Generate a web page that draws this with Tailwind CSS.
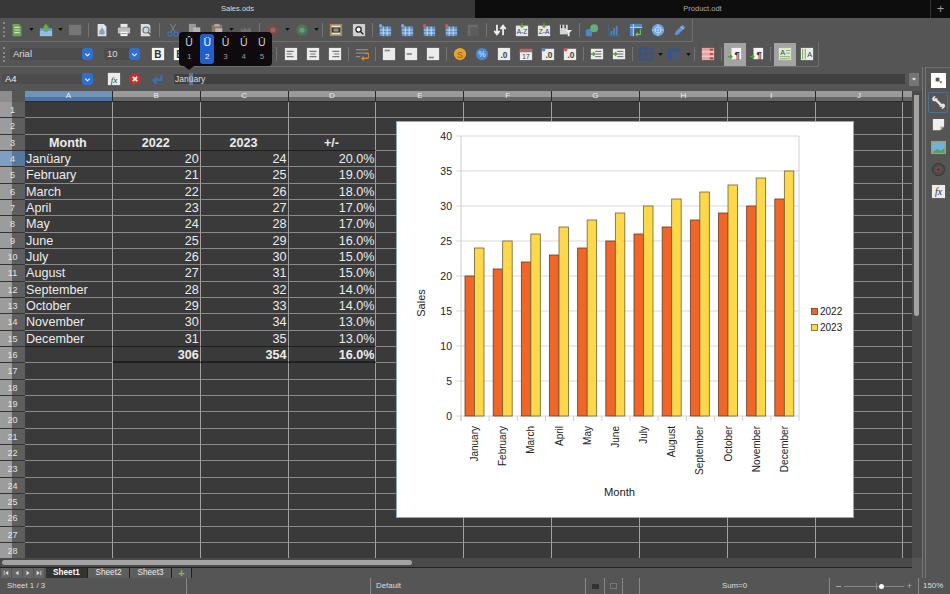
<!DOCTYPE html>
<html lang="en">
<head>
  <meta charset="UTF-8" />
  <title>Sales.ods</title>
  <script src="https://cdn.jsdelivr.net/npm/@tailwindcss/browser@4"></script>
</head>
<body class="w-[950px] h-[594px] overflow-hidden bg-[#555555] font-['Liberation_Sans',Arial,sans-serif] text-[#ececec] flex flex-col relative">

  <!-- icon set -->
  <svg class="hidden">
    <symbol id="i-new" viewBox="0 0 16 16"><path d="M3 1h7l3 3v11H3z" fill="#6fa558"/><path d="M5 5h6M5 8h6M5 11h6" stroke="#cfe3c3" stroke-width="1.200"/></symbol>
    <symbol id="i-open" viewBox="0 0 16 16"><path d="M1 6h14v9H1z" fill="#6f9fd0"/><path d="M1 9h14v6H1z" fill="#93bde6"/><path d="M8 1l4 4H10v5H6V5H4z" fill="#62b33d"/></symbol>
    <symbol id="i-save" viewBox="0 0 16 16"><rect x="1" y="2" width="14" height="12" fill="#767676"/></symbol>
    <symbol id="i-pdf" viewBox="0 0 16 16"><path d="M3 1h7l3 3v11H3z" fill="#dfe3e8"/><path d="M5 9l3-4 3 4v4H5z" fill="#8ea0b5"/></symbol>
    <symbol id="i-print" viewBox="0 0 16 16"><rect x="4" y="1" width="8" height="4" fill="#e6e6e6"/><rect x="1" y="5" width="14" height="7" rx="1" fill="#bdbdbd"/><rect x="4" y="10" width="8" height="5" fill="#f5f5f5"/><path d="M5 12h6" stroke="#888"/></symbol>
    <symbol id="i-preview" viewBox="0 0 16 16"><path d="M2 1h9l2 2v12H2z" fill="#dcdcdc"/><circle cx="8" cy="8" r="3.500" fill="#c8d6e4" stroke="#666" stroke-width="1.200"/><path d="M10.500 10.500l3.500 3.500" stroke="#555" stroke-width="1.600"/></symbol>
    <symbol id="i-cut" viewBox="0 0 16 16"><path d="M5 1l5 9M11 1L6 10" stroke="#7a7a7a" stroke-width="1.300"/><circle cx="4.500" cy="12.500" r="2.300" fill="none" stroke="#3f70ad" stroke-width="1.600"/><circle cx="11.500" cy="12.500" r="2.300" fill="none" stroke="#3f70ad" stroke-width="1.600"/></symbol>
    <symbol id="i-copy" viewBox="0 0 16 16"><path d="M1 1h8v11H1z" fill="#9a9a9a"/><path d="M6 5h8v10H6z" fill="#b5b5b5"/></symbol>
    <symbol id="i-paste" viewBox="0 0 16 16"><rect x="2" y="2" width="12" height="13" fill="#8d7a55"/><rect x="5" y="1" width="6" height="3" fill="#aaa"/><rect x="6" y="6" width="8" height="9" fill="#b5b5b5"/></symbol>
    <symbol id="i-clone" viewBox="0 0 16 16"><path d="M2 5l2 3 3-3 2 3 3-3 2 3v4H2z" fill="#6f6f6f"/></symbol>
    <symbol id="i-undo" viewBox="0 0 16 16"><circle cx="8" cy="8" r="6.500" fill="#7a4a4a"/><circle cx="8" cy="8" r="3" fill="#a06060"/></symbol>
    <symbol id="i-redo" viewBox="0 0 16 16"><circle cx="8" cy="8" r="6.500" fill="#4e7558"/><circle cx="8" cy="8" r="3" fill="#6a9a76"/></symbol>
    <symbol id="i-ab" viewBox="0 0 16 16"><rect x="1" y="1" width="14" height="14" fill="#a9894e"/><rect x="3" y="3" width="10" height="10" fill="#e7e7e7"/><rect x="3" y="5" width="10" height="6" fill="#333"/><path d="M5 7h6M5 9h6" stroke="#ddd"/></symbol>
    <symbol id="i-find" viewBox="0 0 16 16"><rect x="1" y="1" width="14" height="14" rx="1" fill="#cfcfcf"/><circle cx="7.500" cy="7.500" r="3" fill="#fff" stroke="#222" stroke-width="1.500"/><path d="M10 10l3 3" stroke="#222" stroke-width="1.600"/></symbol>
    <symbol id="i-rows" viewBox="0 0 16 16"><rect x="2" y="4" width="13" height="11" fill="#5b8ec8"/><path d="M2 8h13M2 11.500h13M6 4v11M10.500 4v11" stroke="#dbe7f4" stroke-width=".9"/><circle cx="3" cy="3" r="2" fill="#7aa6dc"/></symbol>
    <symbol id="i-rowsdel" viewBox="0 0 16 16"><rect x="2" y="4" width="13" height="11" fill="#5b8ec8"/><path d="M2 8h13M2 11.500h13M6 4v11M10.500 4v11" stroke="#dbe7f4" stroke-width=".9"/><circle cx="3" cy="3" r="2" fill="#d9534f"/></symbol>
    <symbol id="i-freeze" viewBox="0 0 16 16"><rect x="2" y="2" width="12" height="13" fill="#6b6b6b"/><rect x="5" y="5" width="9" height="10" fill="#5c5c5c"/></symbol>
    <symbol id="i-sort" viewBox="0 0 16 16"><path d="M4.500 2v10M1.500 9l3 4 3-4M11.500 14V4M8.500 7l3-4 3 4" fill="none" stroke="#f1f1f1" stroke-width="2"/></symbol>
    <symbol id="i-az" viewBox="0 0 16 16"><rect x="1" y="3" width="14" height="12" fill="#e6e6e6"/><path d="M8 0v4M6 3l2 2 2-2" stroke="#5ea63c" stroke-width="1.400" fill="none"/><text x="8" y="13" text-anchor="middle" font-size="7.500" font-family="Liberation Sans" fill="#444">A-Z</text></symbol>
    <symbol id="i-za" viewBox="0 0 16 16"><rect x="1" y="3" width="14" height="12" fill="#e6e6e6"/><path d="M8 0v4M6 3l2 2 2-2" stroke="#5ea63c" stroke-width="1.400" fill="none"/><text x="8" y="13" text-anchor="middle" font-size="7.500" font-family="Liberation Sans" fill="#444">Z-A</text></symbol>
    <symbol id="i-filter" viewBox="0 0 16 16"><rect x="1" y="2" width="9" height="11" fill="#d5d5d5"/><path d="M3 2v4M7 2v4" stroke="#333" stroke-width="1.500"/><path d="M7 8h8l-3 3v4h-2v-4z" fill="#ededed"/></symbol>
    <symbol id="i-shapes" viewBox="0 0 16 16"><path d="M1 8l7-2v9H1z" fill="#4f86c6"/><circle cx="10.500" cy="6" r="4.500" fill="#5fb07a"/></symbol>
    <symbol id="i-chart" viewBox="0 0 16 16"><path d="M2 2v13h12" fill="none" stroke="#3c6ca6" stroke-width="1"/><path d="M5 14V9M8 14V6M11 14V3" stroke="#4f86c6" stroke-width="2"/></symbol>
    <symbol id="i-pivot" viewBox="0 0 16 16"><rect x="1" y="1" width="14" height="14" fill="#4f86c6"/><path d="M1 5h14M5 1v14" stroke="#d5e4f3"/><rect x="6" y="6" width="9" height="9" fill="#555"/><path d="M13 7v6H8M10 11l-2 2 2 2" fill="none" stroke="#79c257" stroke-width="1.200"/></symbol>
    <symbol id="i-globe" viewBox="0 0 16 16"><circle cx="8" cy="8" r="7" fill="#6da4e3"/><circle cx="8" cy="8" r="3.500" fill="none" stroke="#c9def6"/><path d="M1 8h14M8 1v14" stroke="#c9def6" stroke-width=".7"/></symbol>
    <symbol id="i-pen" viewBox="0 0 16 16"><path d="M2 14l1-4 8-8 3 3-8 8z" fill="#5d95d9"/><path d="M9 4l3 3" stroke="#cfe2f7"/></symbol>
    <symbol id="i-bold" viewBox="0 0 16 16"><rect x="1" y="1" width="14" height="14" fill="#f4f4f4"/><text x="8" y="12.500" text-anchor="middle" font-size="11.500" font-weight="700" font-family="Liberation Sans" fill="#333">B</text></symbol>
    <symbol id="i-left" viewBox="0 0 16 16"><rect x="1" y="1" width="14" height="14" fill="#ececec"/><path d="M3 5h8M3 8h6M3 11h8" stroke="#777" stroke-width="1.200"/></symbol>
    <symbol id="i-center" viewBox="0 0 16 16"><rect x="1" y="1" width="14" height="14" fill="#ececec"/><path d="M4 5h8M5 8h6M4 11h8" stroke="#777" stroke-width="1.200"/></symbol>
    <symbol id="i-right" viewBox="0 0 16 16"><rect x="1" y="1" width="14" height="14" fill="#ececec"/><path d="M5 5h8M7 8h6M5 11h8" stroke="#777" stroke-width="1.200"/></symbol>
    <symbol id="i-wrap" viewBox="0 0 16 16"><path d="M1 3h14M1 7h10M1 11h5" stroke="#8a8a8a" stroke-width="1.300"/><path d="M11 7h2a2 2 0 0 1 0 6H8M10 11l-2 2 2 2" fill="none" stroke="#e58a2e" stroke-width="1.500"/></symbol>
    <symbol id="i-vtop" viewBox="0 0 16 16"><rect x="1" y="1" width="14" height="14" fill="#ececec"/><path d="M3 4h6" stroke="#888" stroke-width="2"/></symbol>
    <symbol id="i-vmid" viewBox="0 0 16 16"><rect x="1" y="1" width="14" height="14" fill="#ececec"/><path d="M3 8h6" stroke="#888" stroke-width="2"/></symbol>
    <symbol id="i-vbot" viewBox="0 0 16 16"><rect x="1" y="1" width="14" height="14" fill="#ececec"/><path d="M3 12h6" stroke="#888" stroke-width="2"/></symbol>
    <symbol id="i-cur" viewBox="0 0 16 16"><circle cx="8" cy="8" r="7" fill="#e5a52b"/><text x="8" y="12" text-anchor="middle" font-size="10.500" font-family="Liberation Sans" fill="#9a5a10">S</text></symbol>
    <symbol id="i-pct" viewBox="0 0 16 16"><circle cx="8" cy="8" r="7" fill="#4f86d0"/><text x="8" y="11.500" text-anchor="middle" font-size="9.500" font-family="Liberation Sans" fill="#dfeafa">%</text></symbol>
    <symbol id="i-num" viewBox="0 0 16 16"><rect x="1" y="1" width="14" height="14" fill="#ececec"/><text x="8" y="12" text-anchor="middle" font-size="9.500" font-weight="700" font-family="Liberation Sans" fill="#444">.0</text></symbol>
    <symbol id="i-date" viewBox="0 0 16 16"><rect x="1" y="3" width="14" height="12" fill="#ececec"/><rect x="1" y="2" width="14" height="4" fill="#b5696b"/><text x="8" y="14" text-anchor="middle" font-size="7.500" font-family="Liberation Sans" fill="#444">17</text></symbol>
    <symbol id="i-numadd" viewBox="0 0 16 16"><rect x="1" y="2" width="14" height="13" fill="#ececec"/><text x="9" y="13" text-anchor="middle" font-size="9.500" font-weight="700" font-family="Liberation Sans" fill="#444">.0</text><circle cx="3" cy="3" r="2" fill="#4f86c6"/></symbol>
    <symbol id="i-numdel" viewBox="0 0 16 16"><rect x="1" y="2" width="14" height="13" fill="#ececec"/><text x="9" y="13" text-anchor="middle" font-size="9.500" font-weight="700" font-family="Liberation Sans" fill="#444">.0</text><circle cx="3" cy="3" r="2" fill="#d9534f"/></symbol>
    <symbol id="i-indent" viewBox="0 0 16 16"><rect x="1" y="2" width="14" height="12" fill="#ececec"/><path d="M6 5h7M6 8h7M6 11h7" stroke="#666" stroke-width="1.100"/><path d="M1 8h4M3.500 6l2 2-2 2" fill="none" stroke="#4ea32f" stroke-width="1.500"/></symbol>
    <symbol id="i-border" viewBox="0 0 16 16"><rect x="1.500" y="1.500" width="13" height="13" fill="none" stroke="#31558c" stroke-width="2"/><path d="M8 1v14M1 8h14" stroke="#31558c" stroke-width="1.500"/></symbol>
    <symbol id="i-bstyle" viewBox="0 0 16 16"><path d="M1 2h14v3H5v10H1z" fill="#31558c"/><path d="M6 6h9M6 9h9M6 12h9M8 6v9M11 6v9M14 6v9" stroke="#3f5f90" stroke-width=".8"/></symbol>
    <symbol id="i-cond" viewBox="0 0 16 16"><rect x="1" y="1" width="14" height="14" fill="#e9a3a0"/><path d="M1 5.500h14M1 10.500h14" stroke="#f6e4e2"/><path d="M10 3h4M10 8h4M10 13h4" stroke="#b53a35" stroke-width="1.800"/></symbol>
    <symbol id="i-ltr" viewBox="0 0 16 16"><rect x="4" y="1" width="11" height="13" fill="#f4f4f4"/><text x="10.500" y="12" text-anchor="middle" font-size="11" font-weight="700" font-family="Liberation Sans" fill="#333">¶</text><path d="M0 11h4M2.500 9l2 2-2 2" fill="none" stroke="#4ea32f" stroke-width="1.600"/></symbol>
    <symbol id="i-atxt" viewBox="0 0 16 16"><rect x="1" y="1" width="14" height="14" fill="#dfead6"/><text x="5.500" y="9" text-anchor="middle" font-size="8.500" font-family="Liberation Sans" fill="#444">A</text><path d="M9 4h5M9 7h5M2 11h12M2 13.500h12" stroke="#79b062"/></symbol>
    <symbol id="i-avert" viewBox="0 0 16 16"><rect x="1" y="1" width="14" height="14" fill="#e8eee2"/><path d="M3 2v12M6 2v12" stroke="#79b062" stroke-width="1.200"/><text x="11" y="11" text-anchor="middle" font-size="8.500" font-family="Liberation Sans" fill="#444">A</text></symbol>
    <symbol id="i-fx" viewBox="0 0 16 16"><rect x="1" y="1" width="14" height="14" fill="#ececec"/><text x="8" y="12" text-anchor="middle" font-size="10.500" font-style="italic" font-family="Liberation Serif" fill="#333">fx</text></symbol>
    <symbol id="i-cancel" viewBox="0 0 16 16"><circle cx="8" cy="8" r="6.500" fill="#c9302c"/><path d="M5.500 5.500l5 5M10.500 5.500l-5 5" stroke="#fff" stroke-width="2"/></symbol>
    <symbol id="i-ok" viewBox="0 0 16 16"><path d="M13 3v6H5M8 6L4 9.500 8 13" fill="none" stroke="#3f6fb3" stroke-width="2.400"/></symbol>
    <symbol id="i-prop" viewBox="0 0 16 16"><rect x="0" y="0" width="16" height="16" fill="#fff"/><rect x="5" y="5" width="4" height="4" fill="#555"/><path d="M9 9h3l-1.500 2z" fill="#333"/></symbol>
    <symbol id="i-wrench" viewBox="0 0 16 16"><path d="M4 4l8.500 8.500" stroke="#e5e5e5" stroke-width="2.600"/><path d="M1 3.500L3.500 1l1.500.5L3.500 3.500l1 1L6.500 3l.5 1.500L4.500 7 2 6.500z" fill="#e5e5e5"/><path d="M15 12.500L12.500 15 11 14.500l1.500-2-1-1-2 1.500-.5-1.500L12.500 9 14.500 9.500z" fill="#e5e5e5"/></symbol>
    <symbol id="i-note" viewBox="0 0 16 16"><path d="M2 2h12v8l-4 4H2z" fill="#f0f0f0"/><path d="M14 10h-4v4z" fill="#aaa"/></symbol>
    <symbol id="i-img" viewBox="0 0 16 16"><rect x="0" y="1" width="16" height="14" fill="#b89a55"/><rect x="1.500" y="2.500" width="13" height="11" fill="#6db3dc"/><path d="M1.500 13.500l5-4 4 2 4-3v5z" fill="#5a9c55"/></symbol>
    <symbol id="i-nav" viewBox="0 0 16 16"><circle cx="8" cy="8" r="6.500" fill="#4c4c4c" stroke="#333"/><circle cx="8" cy="8" r="3.500" fill="#7a4646"/><circle cx="8" cy="8" r="1.300" fill="#3c3c3c"/></symbol>
  </svg>

  <!-- document tabs -->
  <div class="h-[18px] flex text-[7.5px] shrink-0">
    <div class="w-[475px] bg-[#383838] flex items-center justify-center text-[#dddddd]">Sales.ods</div>
    <div class="w-[455px] bg-[#0d0d0d] flex items-center justify-center text-[#aaaaaa]">Product.odt</div>
    <div class="w-[20px] bg-[#0d0d0d] border-l border-[#333] flex items-center justify-center text-[#999] text-[13px]">+</div>
  </div>

  <!-- toolbars -->
  <div id="tb1" class="h-[24px] w-[693px] flex items-center pl-[6px] border-r border-b border-[#6e6e6e] shrink-0"></div>
  <div id="tb2" class="h-[25px] w-[819px] flex items-center pl-[6px] border-r border-b border-[#6e6e6e] shrink-0"></div>

  <div class="flex-1 flex min-h-0">
    <div class="w-[922px] flex flex-col">
      <!-- formula bar -->
      <div class="h-[24px] flex items-center shrink-0 relative">
        <div class="w-[91px] h-[10px] ml-[2px] bg-[#4c4c4c] rounded-[3px] flex items-center pl-[3px] text-[9.500px] relative">A4
          <span class="absolute right-0 -top-[1px] w-[11px] h-[12px] bg-[#2f6fd0] rounded-[3px] flex items-center justify-center"><svg viewBox="0 0 8 8" class="w-[7px] h-[7px]"><path d="M1.500 3l2.500 2.500L6.500 3" fill="none" stroke="#fff" stroke-width="1.300"/></svg></span>
        </div>
        <svg class="w-[14px] h-[14px] ml-[14px]"><use href="#i-fx"/></svg>
        <svg class="w-[14px] h-[14px] ml-[7px]"><use href="#i-cancel"/></svg>
        <svg class="w-[14px] h-[14px] ml-[8px]"><use href="#i-ok"/></svg>
        <div class="w-[731px] h-[10px] ml-[10px] bg-[#404040] flex items-center pl-px text-[8.500px] text-[#dddddd]">Jan<span class="bg-[#4d78ad]">ü</span>ary</div>
        <div class="w-[10px] h-[13px] ml-[4px] bg-[#757575] flex items-center justify-center"><svg viewBox="0 0 8 8" class="w-[6px] h-[6px]"><path d="M1 3h6L4 6z" fill="#eee"/></svg></div>
      </div>

      <!-- sheet -->
      <div class="flex-1 flex min-h-0">
        <div class="w-[912px] relative overflow-hidden bg-[#3a3a3a]">
          <div id="colhead" class="h-[11px] flex"></div>
          <div id="rows"></div>
          <!-- chart sits over the cells -->
          <svg id="chart" width="456" height="395" viewBox="397 122 456 395" class="absolute left-[397px] top-[31px] bg-white outline outline-[#8fa8c4]"></svg>
        </div>
        <!-- vertical scroll -->
        <div class="w-[10px] bg-[#4a4a4a] relative">
          <div class="absolute left-[2px] top-[4px] w-[5px] h-[221px] bg-[#a3a3a3] rounded-b-[3px]"></div>
        </div>
      </div>

      <!-- horizontal scroll -->
      <div class="h-[9px] w-[912px] bg-[#4a4a4a] relative shrink-0">
        <div class="absolute left-[2px] top-[2px] w-[410px] h-[5px] bg-[#a3a3a3] rounded-[3px]"></div>
      </div>

      <!-- sheet tabs -->
      <div class="h-[11px] w-[912px] flex border-t border-[#222] text-[8.200px] shrink-0">
        <div class="w-[46px] flex items-center pl-px gap-px">
          <span class="w-[10px] h-full bg-[#666] flex items-center justify-center"><svg viewBox="0 0 8 8" class="w-[6px] h-[6px]"><path d="M1 1h1v6H1zM7 1v6L3 4z" fill="#ddd"/></svg></span>
          <span class="w-[10px] h-full bg-[#666] flex items-center justify-center"><svg viewBox="0 0 8 8" class="w-[6px] h-[6px]"><path d="M6 1v6L2 4z" fill="#ddd"/></svg></span>
          <span class="w-[10px] h-full bg-[#666] flex items-center justify-center"><svg viewBox="0 0 8 8" class="w-[6px] h-[6px]"><path d="M2 1v6l4-3z" fill="#ddd"/></svg></span>
          <span class="w-[10px] h-full bg-[#666] flex items-center justify-center"><svg viewBox="0 0 8 8" class="w-[6px] h-[6px]"><path d="M1 1v6l4-3zM6 1h1v6H6z" fill="#ddd"/></svg></span>
        </div>
        <div class="w-[42px] bg-[#333] border-r border-[#222] flex items-center justify-center font-bold text-white">Sheet1</div>
        <div class="w-[42px] bg-[#5e5e5e] border-r border-[#222] flex items-center justify-center">Sheet2</div>
        <div class="w-[42px] bg-[#5e5e5e] border-r border-[#222] flex items-center justify-center">Sheet3</div>
        <div class="w-[20px] bg-[#5e5e5e] border-r border-[#222] flex items-center justify-center font-bold text-[#7fc241] text-[11px]">+</div>
      </div>
    </div>

    <!-- sidebar -->
    <div class="w-[28px] flex">
      <div class="w-[4px] border-l border-r border-[#777]"></div>
      <div id="side" class="w-[24px] flex flex-col items-center pt-[2px] border-t border-[#6e6e6e]"></div>
    </div>
  </div>

  <!-- status bar -->
  <div class="h-[16px] flex items-center text-[7.900px] text-[#dddddd] shrink-0">
    <div class="w-[186px] pl-[7px]">Sheet 1 / 3</div>
    <div class="w-[184px] h-full border-l border-[#888]"></div>
    <div class="w-[215px] h-full border-l border-[#888] pl-[5px] flex items-center">Default</div>
    <div class="w-[19px] h-full border-l border-[#888] flex items-center justify-center"><span class="w-[7px] h-[5px] bg-[#333]"></span></div>
    <div class="w-[18px] h-full border-l border-[#888] flex items-center justify-center"><span class="w-[7px] h-[6px] border border-[#777]"></span></div>
    <div class="w-[18px] h-full border-l border-r border-[#888]"></div>
    <div class="w-[189px] h-full flex items-center justify-center">Sum=0</div>
    <div class="w-[90px] h-full border-l border-r border-[#888] flex items-center px-[6px] gap-[3px]">
      <span class="w-[5px] h-px bg-[#aaa]"></span>
      <div class="flex-1 h-px bg-[#888] relative">
        <span class="absolute left-[32px] -top-[3px] w-px h-[7px] bg-[#888]"></span>
        <span class="absolute left-[35px] -top-[2px] w-[5px] h-[5px] rounded-full bg-white"></span>
      </div>
      <span class="text-[#aaa] text-[9px] leading-none">+</span>
    </div>
    <div class="flex-1 pl-[4px]">150%</div>
  </div>

  <!-- accent picker over the toolbar -->
  <div id="accent" class="absolute left-[179px] top-[32px] w-[93px] h-[34px] bg-[#0f0a0d] rounded-[4px] flex items-stretch px-[1px]"></div>
  <div class="absolute left-[184px] top-[66px] w-0 h-0 border-l-[5px] border-r-[5px] border-t-[4px] border-l-transparent border-r-transparent border-t-[#0f0a0d]"></div>

  <script>
    const icon = (id, cls) => `<svg class="${cls}"><use href="#i-${id}"/></svg>`;

    function renderBar(el, items) {
      let html = '<div class="w-[3px] h-[15px] border-l-2 border-dotted border-[#8a8a8a] -ml-[3px]"></div>';
      items.forEach(item => {
        if (item === '|') {
          html += '<div class="w-[5px] flex justify-center"><span class="w-px h-[14px] bg-[#747474]"></span></div>';
        } else if (item === '!') {
          html += '<div class="w-[4px] flex justify-center"><span class="w-px h-[14px] bg-[#747474]"></span></div>';
        } else if (item === 'v') {
          html += '<div class="w-[7px] flex justify-center"><svg viewBox="0 0 6 4" class="w-[5px] h-[3px]"><path d="M0 0h6L3 4z" fill="#111"/></svg></div>';
        } else if (item[0] === '*') {
          html += `<div class="w-[22px] h-[23px] bg-[#a3a3a3] flex items-center justify-center">${icon(item.slice(1), 'w-[14px] h-[14px]')}</div>`;
        } else if (item === '_') {
          html += '<div class="w-[1px]"></div>';
        } else {
          html += `<div class="w-[22px] h-full flex items-center justify-center">${icon(item, 'w-[14px] h-[14px]')}</div>`;
        }
      });
      el.innerHTML = html;
    }

    renderBar(document.getElementById('tb1'), ['new','v','open','v','save','|','pdf','print','preview','|','cut','copy','paste','v','clone','|','undo','v','redo','v','|','ab','_','find','!','rows','rows','rowsdel','rowsdel','freeze','|','sort','az','za','filter','!','shapes','chart','pivot','globe','pen']);

    // second toolbar: combos first, then buttons
    const combo = (text, w) => `<div class="${w} h-[12px] bg-[#4c4c4c] rounded-[3px] flex items-center pl-[3px] text-[9.500px] relative text-[#ddd]">${text}<span class="absolute right-0 top-0 w-[11px] h-[12px] bg-[#2f6fd0] rounded-[3px] flex items-center justify-center"><svg viewBox="0 0 8 8" class="w-[7px] h-[7px]"><path d="M1.500 3l2.500 2.500L6.500 3" fill="none" stroke="#fff" stroke-width="1.300"/></svg></span></div>`;
    const tb2 = document.getElementById('tb2');
    renderBar(tb2, ['bold','bold','bold','bold','bold','|','|','_','v','|','_','left','center','right','|','wrap','|','vtop','vmid','vbot','|','cur','pct','num','date','numadd','numdel','|','indent','indent','|','border','v','bstyle','v','|','cond','|','*ltr','ltr','|','_','*atxt','avert']);
    tb2.children[0].insertAdjacentHTML('afterend', `<div class="w-[141px] flex items-center pl-[4px]">${combo('Arial', 'w-[83px]')}<div class="w-[11px]"></div>${combo('10', 'w-[36px]')}</div>`);

    // accent picker
    const accents = ['Û','Ü','Ù','Ú','Ū'];
    document.getElementById('accent').innerHTML = accents.map((c, i) => {
      const cls = i === 1
        ? 'bg-[#1f5fd0] text-white'
        : 'text-[#d5d5d5]';
      return `<div class="flex-1 my-[2px] mx-[2px] rounded-[3px] flex flex-col items-center justify-between py-[3px] text-[10.500px] leading-none ${cls}"><span>${c}</span><span class="text-[8px] ${i === 1 ? 'text-white' : 'text-[#9a9a9a]'}">${i + 1}</span></div>`;
    }).join('');

    // sidebar
    const side = [['prop', ''], ['wrench', 'border border-[#4f6f90]'], ['note', ''], ['img', ''], ['nav', ''], ['fx', '']];
    document.getElementById('side').innerHTML = side.map(([id, extra]) =>
      `<div class="w-[20px] h-[21px] mb-[1.200px] flex items-center justify-center rounded-[2px] ${extra}">${icon(id, 'w-[15px] h-[15px]')}</div>`
    ).join('');

    // column headers
    const letters = 'ABCDEFGHIJ'.split('');
    let head = '<div class="w-[25px] shrink-0 bg-linear-to-r from-[#8d8d8d] from-50% to-[#555] to-50%"></div>';
    letters.forEach((l, i) => {
      const bg = i === 0
        ? 'bg-linear-to-b from-[#6f93bd] from-55% to-[#4f739f] to-55%'
        : 'bg-linear-to-b from-[#9a9a9a] from-55% to-[#666] to-55%';
      head += `<div class="w-[87.850px] shrink-0 ${bg} border-r border-b border-[#2a2a2a] text-[8px] leading-[10px] text-center text-[#eee]">${l}</div>`;
    });
    head += '<div class="flex-1 bg-linear-to-b from-[#9a9a9a] from-55% to-[#666] to-55% border-b border-[#2a2a2a]"></div>';
    document.getElementById('colhead').innerHTML = head;

    // sheet data, row number -> cells
    const months = ['Janüary','February','March','April','May','June','July','August','September','October','November','December'];
    const pct = ['20.0%','19.0%','18.0%','17.0%','17.0%','16.0%','15.0%','15.0%','14.0%','14.0%','13.0%','13.0%'];
    const data = { 3: ['Month', '2022', '2023', '+/-'], 16: ['', '306', '354', '16.0%'] };
    months.forEach((m, i) => { data[i + 4] = [m, String(20 + i), String(24 + i), pct[i]]; });

    let rows = '';
    for (let r = 1; r <= 28; r++) {
      const rowBg = r === 4
        ? 'bg-linear-to-r from-[#7f9ec2] from-50% to-[#55789f] to-50%'
        : 'bg-linear-to-r from-[#9c9c9c] from-50% to-[#5e5e5e] to-50%';
      rows += `<div class="h-[16.330px] flex"><div class="w-[25px] shrink-0 ${rowBg} border-b border-[#333] text-[9px] leading-[16px] text-center text-[#e4e4e4]">${r}</div>`;
      letters.forEach((l, c) => {
        const val = data[r] && c < 4 ? data[r][c] : '';
        let border = 'border-b border-[#8a8a8a]';
        if (c < 4 && (r === 3 || r === 15)) border = 'border-b border-[#1e1e1e]';
        if (c > 0 && c < 4 && r === 16) border = 'border-b-2 border-[#1e1e1e]';
        let text = 'text-right pr-px';
        if (c === 0) text = 'text-left pl-px';
        if (r === 3) text = 'text-center font-bold pr-[1px]';
        if (r === 16) text = 'text-right pr-px font-bold';
        rows += `<div class="w-[87.850px] shrink-0 border-r border-r-[#a0a0a0] ${border} text-[12.600px] leading-[16px] ${text}">${val}</div>`;
      });
      rows += '<div class="flex-1 border-b border-[#8a8a8a]"></div></div>';
    }
    document.getElementById('rows').innerHTML = rows;

    // chart
    const x0 = 461, x1 = 799, yBase = 416, step = (x1 - x0) / 12;
    const labels = ['January', ...months.slice(1)];
    let svg = '';
    for (let v = 0; v <= 40; v += 5) {
      const y = yBase - v * 7;
      svg += `<path d="M456 ${y}H${x1}" stroke="#d9d9d9"/>`;
      svg += `<text x="452" y="${y + 4}" text-anchor="end" font-size="10.500" fill="#222" font-family="Liberation Sans">${v}</text>`;
    }
    svg += `<path d="M${x0} 136V${yBase + 5}M${x1} 136V${yBase + 5}" stroke="#cfcfcf"/>`;
    labels.forEach((m, i) => {
      const left = x0 + step * i;
      const a = 20 + i, b = 24 + i;
      svg += `<path d="M${left} ${yBase}v5" stroke="#cfcfcf"/>`;
      svg += `<rect x="${left + 4}" y="${yBase - a * 7}" width="9.500" height="${a * 7}" fill="#ef6628" stroke="#6b3a1e" stroke-width=".8"/>`;
      svg += `<rect x="${left + 13.500}" y="${yBase - b * 7}" width="9.500" height="${b * 7}" fill="#fdd84a" stroke="#6f6232" stroke-width=".8"/>`;
      svg += `<text transform="translate(${left + 17} 426) rotate(-90)" text-anchor="end" font-size="10" fill="#222" font-family="Liberation Sans">${m}</text>`;
    });
    svg += `<text transform="translate(425 303) rotate(-90)" text-anchor="middle" font-size="11" fill="#222" font-family="Liberation Sans">Sales</text>`;
    svg += `<text x="619.500" y="496" text-anchor="middle" font-size="11.200" fill="#222" font-family="Liberation Sans">Month</text>`;
    svg += `<rect x="811.500" y="308.500" width="6" height="6" fill="#ef6628" stroke="#6b3a1e" stroke-width=".8"/><text x="820" y="315" font-size="10" fill="#222" font-family="Liberation Sans">2022</text>`;
    svg += `<rect x="811.500" y="324.500" width="6" height="6" fill="#fdd84a" stroke="#6f6232" stroke-width=".8"/><text x="820" y="331" font-size="10" fill="#222" font-family="Liberation Sans">2023</text>`;
    document.getElementById('chart').innerHTML = svg;
  </script>
</body>
</html>
